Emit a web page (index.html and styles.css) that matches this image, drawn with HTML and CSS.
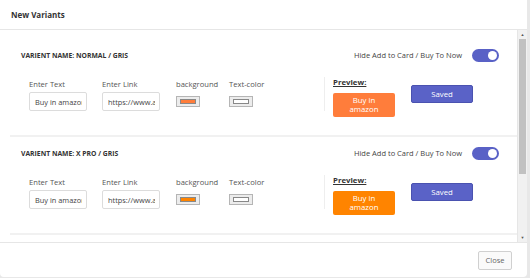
FILE: index.html
```html
<!DOCTYPE html>
<html lang="en">
<head>
  <meta charset="UTF-8">
  <meta name="viewport" content="width=device-width, initial-scale=1.0">
  <title>New Variants</title>
  <link rel="stylesheet" href="styles.css">
</head>
<body>

  <div class="modal">
    <!-- Header -->
    <div class="modal-header">
      <h3>New Variants</h3>
    </div>

    <!-- Body with variant list -->
    <div class="modal-body">
      <div class="variant-list">

        <div class="variant">
          <div class="variant-head">
            <span class="variant-name">Varient name: Normal / Gris</span>
            <label class="hide-toggle">
              <span>Hide Add to Card / Buy To Now</span>
              <span class="switch"><span class="knob"></span></span>
            </label>
          </div>
          <div class="variant-body">
            <div class="fields">
              <div class="field">
                <span class="field-label">Enter Text</span>
                <input type="text" value="Buy in amazon">
              </div>
              <div class="field">
                <span class="field-label">Enter Link</span>
                <input type="text" value="https://www.amazon.com">
              </div>
              <div class="field">
                <span class="field-label">background</span>
                <span class="swatch"><span class="swatch-color orange-light"></span></span>
              </div>
              <div class="field">
                <span class="field-label">Text-color</span>
                <span class="swatch"><span class="swatch-color white"></span></span>
              </div>
            </div>
            <div class="preview">
              <span class="preview-title">Preview:</span>
              <button class="buy-btn orange-light">Buy in<br>amazon</button>
            </div>
            <button class="saved-btn">Saved</button>
          </div>
        </div>

        <div class="variant">
          <div class="variant-head">
            <span class="variant-name">Varient name: X Pro / Gris</span>
            <label class="hide-toggle">
              <span>Hide Add to Card / Buy To Now</span>
              <span class="switch"><span class="knob"></span></span>
            </label>
          </div>
          <div class="variant-body">
            <div class="fields">
              <div class="field">
                <span class="field-label">Enter Text</span>
                <input type="text" value="Buy in amazon">
              </div>
              <div class="field">
                <span class="field-label">Enter Link</span>
                <input type="text" value="https://www.amazon.com">
              </div>
              <div class="field">
                <span class="field-label">background</span>
                <span class="swatch"><span class="swatch-color orange"></span></span>
              </div>
              <div class="field">
                <span class="field-label">Text-color</span>
                <span class="swatch"><span class="swatch-color white"></span></span>
              </div>
            </div>
            <div class="preview">
              <span class="preview-title">Preview:</span>
              <button class="buy-btn orange">Buy in<br>amazon</button>
            </div>
            <button class="saved-btn">Saved</button>
          </div>
        </div>

      </div>

      <!-- fake scrollbar -->
      <div class="scrollbar">
        <span class="arrow">&#9650;</span>
        <span class="thumb"></span>
        <span class="track"></span>
        <span class="arrow">&#9660;</span>
      </div>
    </div>

    <!-- Footer -->
    <div class="modal-footer">
      <button class="close-btn">Close</button>
    </div>
  </div>

</body>
</html>
```

FILE: styles.css
```css
body {
  margin: 0;
  padding: 0;
  background-color: #e8e8e8;
  font-family: "Open Sans", Arial, sans-serif;
  color: #333;
}

.modal {
  width: 527px;
  height: 277px;
  background-color: white;
  border-radius: 0 0 4px 4px;
  display: flex;
  flex-direction: column;
  overflow: hidden;
}

.modal-header {
  height: 29px;
  border-bottom: 1px solid #e6e6e6;
  display: flex;
  align-items: center;
  padding-left: 11px;
}

.modal-header h3 {
  margin: 0;
  font-size: 8px;
  font-weight: bold;
  color: #333;
}

.modal-body {
  height: 212px;
  border-bottom: 1px solid #e6e6e6;
  display: flex;
}

.variant-list {
  flex: 1;
  overflow: hidden;
  padding: 9px 0 0 10px;
}

.variant {
  padding: 9px 18px 18px 11px;
  border-bottom: 2px solid #f1f1f1;
}

.variant-head {
  display: flex;
  justify-content: space-between;
  align-items: center;
  height: 14px;
}

.variant-name {
  font-size: 6.8px;
  font-weight: bold;
  text-transform: uppercase;
  color: #333;
}

.hide-toggle {
  display: flex;
  align-items: center;
  gap: 10px;
  font-size: 7.5px;
  color: #444;
}

.switch {
  width: 27px;
  height: 13px;
  border-radius: 7px;
  background-color: #5961c6;
  display: flex;
  align-items: center;
  justify-content: flex-end;
  padding-right: 2px;
  box-sizing: border-box;
}

.knob {
  width: 9px;
  height: 9px;
  border-radius: 50%;
  background-color: white;
}

.variant-body {
  display: flex;
  align-items: flex-start;
  margin-top: 15px;
  padding-left: 8px;
}

.fields {
  width: 295px;
  display: grid;
  grid-template-columns: 58px 59px 38px auto;
  column-gap: 15px;
  border-right: 1px solid #eeeeee;
}

.field {
  display: flex;
  flex-direction: column;
  align-items: flex-start;
}

.field-label {
  font-size: 7.6px;
  line-height: 14px;
  margin-bottom: 1px;
  color: #555;
  white-space: nowrap;
}

.field input {
  width: 58px;
  height: 19px;
  box-sizing: border-box;
  border: 1px solid #dcdcdc;
  border-radius: 2px;
  padding: 0 4px 0 5px;
  font-family: inherit;
  font-size: 7.4px;
  color: #444;
}

.swatch {
  margin-top: 4px;
  width: 24px;
  height: 11px;
  box-sizing: border-box;
  border: 1px solid #b5b5b5;
  background-color: #ececec;
  padding: 2px 3px;
  display: flex;
}

.swatch-color {
  flex: 1;
  border: 1px solid #888;
}

.swatch-color.white {
  background-color: white;
}

.orange-light {
  background-color: #ff7d3b;
}

.orange {
  background-color: #ff8400;
}

.preview {
  display: flex;
  flex-direction: column;
  align-items: flex-start;
  padding-left: 8px;
}

.preview-title {
  font-size: 7.8px;
  font-weight: bold;
  text-decoration: underline;
  line-height: 11px;
  color: #333;
  margin-bottom: 5px;
}

button {
  font-family: inherit;
  cursor: pointer;
}

.buy-btn {
  width: 62px;
  height: 24px;
  border: none;
  border-radius: 2px;
  color: white;
  font-size: 7.8px;
  line-height: 9px;
  padding: 0;
}

.saved-btn {
  margin: 8px 0 0 16px;
  width: 62px;
  height: 18px;
  border: 1px solid #4a52b0;
  border-radius: 2px;
  background-color: #5a62c7;
  color: white;
  font-size: 7.8px;
  padding: 0;
}

.scrollbar {
  width: 9px;
  background-color: #f1f1f1;
  border-left: 1px solid #e6e6e6;
  display: flex;
  flex-direction: column;
}

.arrow {
  height: 9px;
  font-size: 4px;
  line-height: 9px;
  text-align: center;
  color: #555;
}

.thumb {
  height: 135px;
  margin: 0 1px;
  background-color: #c1c1c1;
}

.track {
  flex: 1;
}

.modal-footer {
  flex: 1;
  display: flex;
  justify-content: flex-end;
  align-items: center;
  padding-right: 15px;
}

.close-btn {
  width: 34px;
  height: 19px;
  border: 1px solid #d0d0d0;
  border-radius: 2px;
  background-color: #fafafa;
  color: #666;
  font-size: 7.5px;
  padding: 0;
}
```
